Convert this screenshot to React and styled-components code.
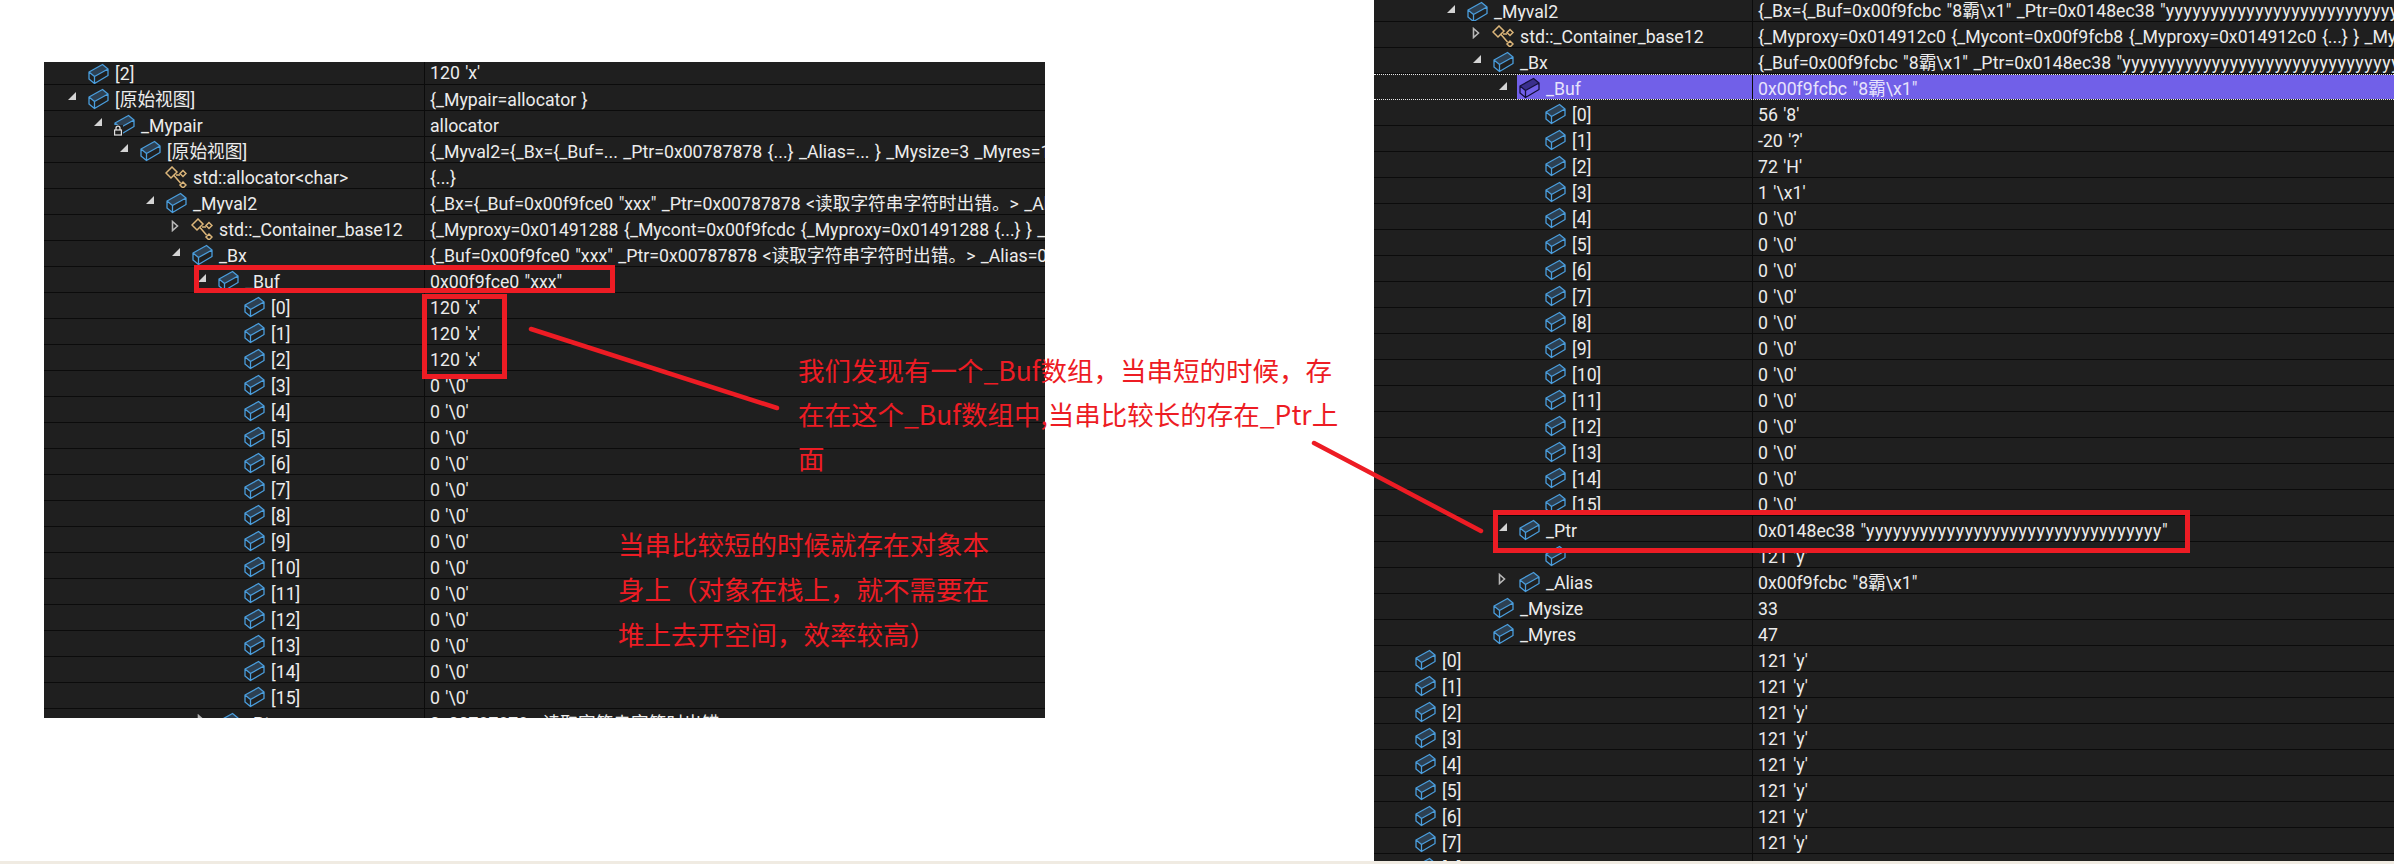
import React from 'react';
import styled, { createGlobalStyle } from 'styled-components';

const GlobalStyle = createGlobalStyle`
  html, body {
    margin: 0;
    padding: 0;
    background: #fff;
  }
`;

/* Page */
const Page = styled.div`
  position: relative;
  width: 2394px;
  height: 864px;
  overflow: hidden;
  background: #fff;
  font-family: 'Roboto', 'Noto Sans CJK SC', sans-serif;
`;

const Shots = styled.div`
  display: flex;
  align-items: flex-start;
  height: 861px;
`;

const BottomStrip = styled.div`
  height: 3px;
  background: #f0ebe2;
`;

/* Debugger watch window */
const Panel = styled.div`
  flex: none;
  width: ${(p) => p.$width}px;
  height: ${(p) => p.$height}px;
  margin: ${(p) => p.$margin};
  overflow: hidden;
  background: #1f1f1f;
`;

const Row = styled.div`
  --text-push: ${(p) => (p.$height ? '0px' : '2px')};
  display: grid;
  grid-template-columns: ${(p) => p.$nameWidth}px 1fr;
  height: ${(p) => p.$height || 26}px;
  box-sizing: border-box;
  border-bottom: 1px solid #0b0b0b;
  color: #ececec;
  font-size: 17.7px;
  line-height: 20px;
  white-space: nowrap;
  ${(p) => p.$selected && `
    border-top: 1px dotted #e8e8e8;
    border-bottom: 1px dotted #e8e8e8;
  `}
`;

const NameCell = styled.div`
  display: flex;
  align-items: center;
  min-width: 0;
  padding: 2px 0 0 ${(p) => p.$indent}px;
  border-right: 1px solid #0b0b0b;
  overflow: hidden;
`;

const Toggle = styled.span`
  flex: none;
  display: flex;
  width: 20px;
  margin-top: -5px;
`;

const IconSlot = styled.span`
  flex: none;
  display: flex;
  width: 22px;
  height: 22px;
`;

const Selection = styled.div`
  display: flex;
  align-items: center;
  align-self: stretch;
  flex: 1;
  margin: -2px 0 0 -1px;
  padding: 2px 0 0 1px;
  background: ${(p) => (p.$on ? '#7160e8' : 'transparent')};
`;

const Name = styled.span`
  margin: var(--text-push) 0 0 6px;
  color: ${(p) => (p.$on ? '#e6e2fb' : 'inherit')};
`;

const Value = styled.div`
  display: flex;
  align-items: center;
  padding: calc(2 * var(--text-push)) 0 0 5px;
  overflow: hidden;
  word-spacing: 1px;
  background: ${(p) => (p.$on ? '#7160e8' : 'transparent')};
  color: ${(p) => (p.$on ? '#e6e2fb' : 'inherit')};
`;

const Ys = styled.span`
  letter-spacing: 0.6px;
`;

/* Red markup drawn on top of the screenshots */
const RedBox = styled.div`
  position: absolute;
  left: ${(p) => p.$x}px;
  top: ${(p) => p.$y}px;
  width: ${(p) => p.$w}px;
  height: ${(p) => p.$h}px;
  box-sizing: border-box;
  border: 5px solid #ed1c24;
`;

const Note = styled.div`
  position: absolute;
  left: ${(p) => p.$x}px;
  top: ${(p) => p.$y}px;
  color: #ed1c24;
  font-family: 'Noto Sans CJK SC', sans-serif;
  font-size: 26.5px;
  font-weight: 400;
  line-height: ${(p) => p.$lh}px;
  white-space: nowrap;
`;

const Arrows = styled.svg`
  position: absolute;
  left: 0;
  top: 0;
  pointer-events: none;
`;

function Triangle({ open }) {
  if (open) {
    return (
      <svg width="10" height="10" viewBox="0 0 10 10">
        <path d="M9 1V9H1Z" fill="#d4d4d4" />
      </svg>
    );
  }
  return (
    <svg width="10" height="12" viewBox="0 0 10 12">
      <path d="M1.5 1.5L6.5 6L1.5 10.5Z" fill="none" stroke="#b8b8b8" strokeWidth="1.6" />
    </svg>
  );
}

function FieldIcon({ dark, locked }) {
  const stroke = dark ? '#15103c' : '#4a9ddc';
  const fill = dark ? '#3a2f8c' : '#2d4052';
  return (
    <svg width="22" height="22" viewBox="0 0 22 22">
      <path d="M2 9L15.5 1.5L21 6L7.5 13.5Z" fill={fill} />
      <path
        d="M2 9L15.5 1.5L21 6V12.5L7.5 20.5L2 16ZM2 9L7.5 13.5L21 6M7.5 13.5V20.5"
        fill="none"
        stroke={stroke}
        strokeWidth="1.3"
        strokeLinejoin="round"
      />
      {locked && (
        <g>
          <rect x="0" y="11" width="10" height="11" fill="#1f1f1f" />
          <path d="M3 16V14.2A2 2 0 0 1 7 14.2V16" fill="none" stroke="#e0e0e0" strokeWidth="1.3" />
          <rect x="1.6" y="16" width="6.8" height="5" fill="#1f1f1f" stroke="#e0e0e0" strokeWidth="1.2" />
        </g>
      )}
    </svg>
  );
}

function ClassIcon() {
  return (
    <svg width="22" height="24" viewBox="0 0 22 24">
      <g fill="none" stroke="#dcb67a" strokeWidth="1.5">
        <path d="M1 7L7 1L12 6L6 12Z" />
        <path d="M15 7.5L18 4.5L21 7.5L18 10.5Z" />
        <path d="M15 19L18 16L21 19L18 22Z" />
        <path d="M11 9L15 9M9 9.5L15.5 17" />
      </g>
    </svg>
  );
}

function WatchRow({ level = 0, toggle, icon = 'field', name, value, height, selected, base, nameWidth }) {
  return (
    <Row $nameWidth={nameWidth} $height={height} $selected={selected}>
      <NameCell $indent={base + level * 26}>
        <Toggle>{toggle && <Triangle open={toggle === 'open'} />}</Toggle>
        <Selection $on={selected}>
          <IconSlot>
            {icon === 'class' ? <ClassIcon /> : <FieldIcon dark={selected} locked={icon === 'locked'} />}
          </IconSlot>
          <Name $on={selected}>{name}</Name>
        </Selection>
      </NameCell>
      <Value $on={selected}><span>{value}</span></Value>
    </Row>
  );
}

const emptyChars = (from, to, level) => {
  const rows = [];
  for (let i = from; i <= to; i++) {
    rows.push({ level, name: `[${i}]`, value: "0 '\\0'" });
  }
  return rows;
};

const leftRows = [
  { level: 0, name: '[2]', value: "120 'x'", height: 23 },
  { level: 0, toggle: 'open', name: '[原始视图]', value: '{_Mypair=allocator }' },
  { level: 1, toggle: 'open', icon: 'locked', name: '_Mypair', value: 'allocator' },
  { level: 2, toggle: 'open', name: '[原始视图]', value: '{_Myval2={_Bx={_Buf=... _Ptr=0x00787878 {...} _Alias=... } _Mysize=3 _Myres=15 }' },
  { level: 3, icon: 'class', name: 'std::allocator<char>', value: '{...}' },
  { level: 3, toggle: 'open', name: '_Myval2', value: '{_Bx={_Buf=0x00f9fce0 "xxx" _Ptr=0x00787878 <读取字符串字符时出错。> _Alias=0x00f9fce0 "xxx" } _Mysize=3 }' },
  { level: 4, toggle: 'closed', icon: 'class', name: 'std::_Container_base12', value: '{_Myproxy=0x01491288 {_Mycont=0x00f9fcdc {_Myproxy=0x01491288 {...} } _Myfirstiter=0x00000000 } }' },
  { level: 4, toggle: 'open', name: '_Bx', value: '{_Buf=0x00f9fce0 "xxx" _Ptr=0x00787878 <读取字符串字符时出错。> _Alias=0x00f9fce0 "xxx" }' },
  { level: 5, toggle: 'open', name: '_Buf', value: '0x00f9fce0 "xxx"' },
  { level: 6, name: '[0]', value: "120 'x'" },
  { level: 6, name: '[1]', value: "120 'x'" },
  { level: 6, name: '[2]', value: "120 'x'" },
  ...emptyChars(3, 15, 6),
  { level: 5, toggle: 'closed', name: '_Ptr', value: '0x00787878 <读取字符串字符时出错。>' },
];

const longY = <Ys>{'y'.repeat(33)}</Ys>;

const rightRows = [
  { level: 2, toggle: 'open', name: '_Myval2', value: <>{'{_Bx={_Buf=0x00f9fcbc "8霸\\x1" _Ptr=0x0148ec38 "'}{longY}{'" _Alias=0x00f9fcbc "8霸\\x1" } _Mysize=33 }'}</>, height: 22 },
  { level: 3, toggle: 'closed', icon: 'class', name: 'std::_Container_base12', value: '{_Myproxy=0x014912c0 {_Mycont=0x00f9fcb8 {_Myproxy=0x014912c0 {...} } _Myfirstiter=0x00000000 } }' },
  { level: 3, toggle: 'open', name: '_Bx', value: <>{'{_Buf=0x00f9fcbc "8霸\\x1" _Ptr=0x0148ec38 "'}{longY}{'" _Alias=0x00f9fcbc "8霸\\x1" }'}</> },
  { level: 4, toggle: 'open', name: '_Buf', value: '0x00f9fcbc "8霸\\x1"', selected: true },
  { level: 5, name: '[0]', value: "56 '8'" },
  { level: 5, name: '[1]', value: "-20 '?'" },
  { level: 5, name: '[2]', value: "72 'H'" },
  { level: 5, name: '[3]', value: "1 '\\x1'" },
  ...emptyChars(4, 15, 5),
  { level: 4, toggle: 'open', name: '_Ptr', value: <>{'0x0148ec38 "'}{longY}{'"'}</> },
  { level: 5, name: '', value: "121 'y'" },
  { level: 4, toggle: 'closed', name: '_Alias', value: '0x00f9fcbc "8霸\\x1"' },
  { level: 3, name: '_Mysize', value: '33' },
  { level: 3, name: '_Myres', value: '47' },
  ...[0, 1, 2, 3, 4, 5, 6, 7, 8].map((i) => ({ level: 0, name: `[${i}]`, value: "121 'y'" })),
];

export default function App() {
  return (
    <Page>
      <GlobalStyle />
      <Shots>
        <Panel $width={1001} $height={656} $margin="62px 0 0 44px">
          {leftRows.map((row, i) => (
            <WatchRow key={i} {...row} base={23} nameWidth={381} />
          ))}
        </Panel>
        <Panel $width={1020} $height={861} $margin="0 0 0 329px">
          {rightRows.map((row, i) => (
            <WatchRow key={i} {...row} base={20} nameWidth={379} />
          ))}
        </Panel>
      </Shots>
      <BottomStrip />

      <RedBox $x={194} $y={265} $w={421} $h={28} />
      <RedBox $x={422} $y={294} $w={85} $h={85} />
      <RedBox $x={1493} $y={510} $w={697} $h={43} />

      <Arrows width="2394" height="864" viewBox="0 0 2394 864">
        <g stroke="#ed1c24" strokeWidth="4.5" strokeLinecap="round">
          <line x1="531" y1="329" x2="777" y2="408" />
          <line x1="1314" y1="443" x2="1481" y2="531" />
        </g>
      </Arrows>

      <Note $x={798} $y={348} $lh={44}>
        我们发现有一个_Buf数组，当串短的时候，存<br />
        在在这个_Buf数组中,当串比较长的存在_Ptr上<br />
        面
      </Note>
      <Note $x={618} $y={521} $lh={45}>
        当串比较短的时候就存在对象本<br />
        身上（对象在栈上，就不需要在<br />
        堆上去开空间，效率较高）
      </Note>
    </Page>
  );
}
